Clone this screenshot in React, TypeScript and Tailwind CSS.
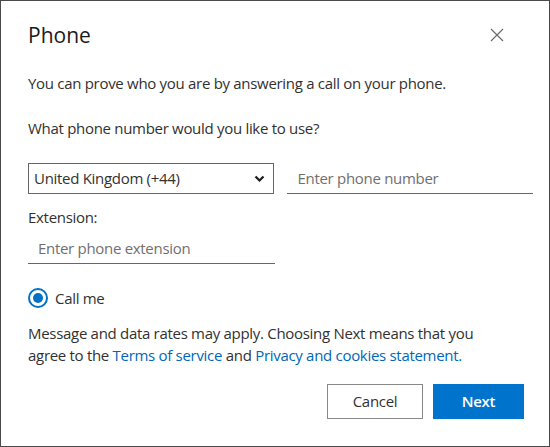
export default function App() {
  return (
    <div className="w-[550px] h-[447px] border border-[#4a4a4a] bg-white font-['Segoe_UI','Open_Sans',sans-serif] tracking-[-0.3px] text-[#323130]">
      <div className="pl-[27px] pr-[16px] pt-[19px]">
        {/* TITLE */}
        <div className="flex h-[30px] items-center justify-between">
          <h1 className="text-[21px] leading-[30px] tracking-normal text-[#1b1b1b]">Phone</h1>
          <button className="mr-[28px] flex h-[16px] w-[16px] items-center justify-center text-[#6b6b6b]">
            <svg width="14" height="14" viewBox="0 0 14 14" fill="none">
              <path d="M1 1L13 13M13 1L1 13" stroke="currentColor" strokeWidth="1.2" />
            </svg>
          </button>
        </div>

        <p className="mt-[22px] text-[15px] leading-[22px]">
          You can prove who you are by answering a call on your phone.
        </p>
        <p className="mt-[23px] text-[15px] leading-[22px]">
          What phone number would you like to use?
        </p>

        {/* NUMBER ROW */}
        <div className="mt-[24px] flex gap-[13px]">
          <div className="relative flex h-[31px] w-[247px] items-center border border-[#666] pl-[5px] text-[15px]">
            <span>United Kingdom (+44)</span>
            <svg className="absolute right-[8px] top-[11px]" width="11" height="8" viewBox="0 0 11 8" fill="none">
              <path d="M1.5 1.5L5.5 5.5L9.5 1.5" stroke="#1b1b1b" strokeWidth="2.2" />
            </svg>
          </div>
          <input
            placeholder="Enter phone number"
            className="h-[31px] w-[246px] border-b border-[#666] px-[10px] text-[15px] outline-none placeholder:text-[#707070]"
          />
        </div>

        <p className="mt-[12px] text-[15px] leading-[22px]">Extension:</p>
        <input
          placeholder="Enter phone extension"
          className="mt-[4px] h-[32px] w-[247px] border-b border-[#666] px-[10px] text-[15px] outline-none placeholder:text-[#707070]"
        />

        {/* RADIO */}
        <label className="mt-[23px] flex h-[22px] items-center gap-[7px] text-[15px]">
          <span className="flex h-[20px] w-[20px] items-center justify-center rounded-full border-2 border-[#0071c5]">
            <span className="h-[10px] w-[10px] rounded-full bg-[#0071c5]" />
          </span>
          <span>Call me</span>
        </label>

        <p className="mt-[13px] w-[462px] text-[15px] leading-[22px]">
          Message and data rates may apply. Choosing Next means that you agree to the{" "}
          <a className="text-[#0067b8]">Terms of service</a> and{" "}
          <a className="text-[#0067b8]">Privacy and cookies statement.</a>
        </p>

        {/* BUTTONS */}
        <div className="mt-[18px] flex justify-end gap-[10px] pr-[9px]">
          <button className="h-[35px] w-[96px] border border-[#8a8886] text-[15px] text-[#323130]">
            Cancel
          </button>
          <button className="h-[35px] w-[91px] bg-[#0074cc] text-[15px] font-semibold text-white">
            Next
          </button>
        </div>
      </div>
    </div>
  );
}
